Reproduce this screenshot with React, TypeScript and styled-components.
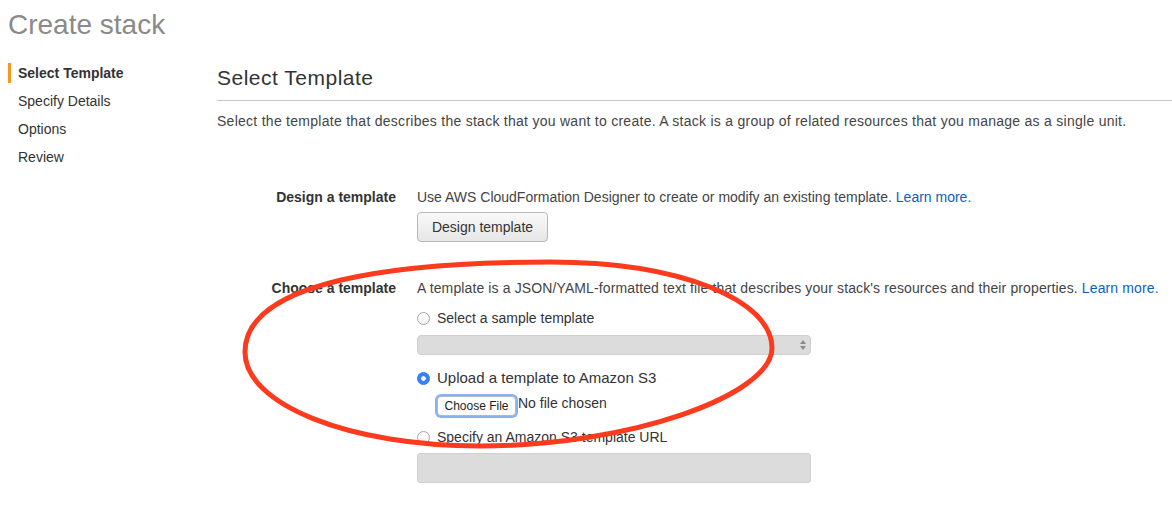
import React from "react";
import styled, { createGlobalStyle } from "styled-components";

const Global = createGlobalStyle`
  html, body { margin: 0; padding: 0; background: #fff; }
  body { font-family: "Liberation Sans", Arial, Helvetica, sans-serif; color: #444; }
  * { box-sizing: border-box; }
`;

const Page = styled.div`
  position: relative;
  width: 1172px;
  height: 512px;
  overflow: hidden;
  padding: 8px 0 0 8px;
`;

const Title = styled.h1`
  margin: 0;
  font-size: 28px;
  line-height: 34px;
  font-weight: 400;
  color: #8a8a8a;
`;

const Layout = styled.div`
  display: grid;
  grid-template-columns: 209px 1fr;
  margin-top: 21px;
`;

const Nav = styled.ul`
  list-style: none;
  margin: 0;
  padding: 0;
  display: flex;
  flex-direction: column;
  gap: 8px;
`;

const NavItem = styled.li<{ $active?: boolean }>`
  height: 20px;
  line-height: 20px;
  font-size: 14px;
  padding-left: 7px;
  border-left: 3px solid ${(p) => (p.$active ? "#f7981d" : "transparent")};
  font-weight: ${(p) => (p.$active ? 700 : 400)};
  color: #333;
`;

const Main = styled.div`
  padding-top: 1px;
`;

const Heading = styled.h2`
  margin: 0;
  font-size: 21px;
  line-height: 28px;
  font-weight: 400;
  color: #333;
  letter-spacing: 0.5px;
  padding-bottom: 8px;
  border-bottom: 1px solid #c8c8c8;
`;

const Lead = styled.p`
  margin: 10px 0 0;
  font-size: 14px;
  line-height: 20px;
  letter-spacing: 0.27px;
  color: #444;
`;

const FormRow = styled.div<{ $gap: number }>`
  display: grid;
  grid-template-columns: 179px 1fr;
  column-gap: 21px;
  margin-top: ${(p) => p.$gap}px;
`;

const Label = styled.div`
  text-align: right;
  font-size: 14px;
  line-height: 20px;
  font-weight: 700;
  color: #333;
`;

const Field = styled.div`
  display: flex;
  flex-direction: column;
  align-items: flex-start;
`;

const Text = styled.div<{ $spacing?: number }>`
  font-size: 14px;
  line-height: 20px;
  letter-spacing: ${(p) => p.$spacing ?? 0}px;
  color: #444;
`;

const Link = styled.a`
  color: #0b5fbf;
  text-decoration: none;
`;

const Button = styled.button`
  margin-top: 5px;
  height: 30px;
  width: 131px;
  font-family: inherit;
  font-size: 14px;
  color: #333;
  border: 1px solid #b8b8b8;
  border-radius: 4px;
  background: linear-gradient(#f9f9f9, #e6e6e6);
  padding: 0;
`;

const RadioRow = styled.label<{ $gap: number; $size?: number }>`
  display: flex;
  align-items: center;
  gap: 7px;
  margin-top: ${(p) => p.$gap}px;
  font-size: ${(p) => p.$size ?? 14}px;
  line-height: 20px;
  color: #333;
`;

const Radio = styled.span<{ $checked?: boolean }>`
  width: 13px;
  height: 13px;
  border-radius: 50%;
  flex: none;
  border: 1px solid ${(p) => (p.$checked ? "#2a73ee" : "#a6a6a6")};
  background: ${(p) =>
    p.$checked
      ? "radial-gradient(circle, #fff 0 2px, #3b82f6 2.5px)"
      : "linear-gradient(#fff, #f2f2f2)"};
`;

const Select = styled.div`
  position: relative;
  margin-top: 7px;
  width: 394px;
  height: 20px;
  border-radius: 4px;
  border: 1px solid #cfcfcf;
  background: #dcdcdc;
`;

const SelectArrows = styled.svg`
  position: absolute;
  right: 3px;
  top: 3px;
`;

const FileRow = styled.div`
  display: flex;
  align-items: center;
  gap: 2px;
  margin-top: 8px;
  margin-left: 20px;
`;

const FileButton = styled.button`
  width: 79px;
  height: 20px;
  padding: 0;
  font-family: inherit;
  font-size: 12px;
  color: #222;
  background: #fff;
  border: 1px solid #a9b8d6;
  border-radius: 4px;
  box-shadow: 0 0 0 2px #8ab0f4;
`;

const FileText = styled.span`
  font-size: 14px;
  color: #333;
  margin-top: -6px;
`;

const Input = styled.div`
  margin-top: 6px;
  width: 394px;
  height: 30px;
  border-radius: 3px;
  border: 1px solid #cfcfcf;
  background: #dcdcdc;
`;

const Annotation = styled.svg`
  position: absolute;
  left: 0;
  top: 0;
  pointer-events: none;
`;

export default function App() {
  return (
    <>
      <Global />
      <Page>
        <Title>Create stack</Title>
        <Layout>
          <Nav>
            <NavItem $active>Select Template</NavItem>
            <NavItem>Specify Details</NavItem>
            <NavItem>Options</NavItem>
            <NavItem>Review</NavItem>
          </Nav>
          <Main>
            <Heading>Select Template</Heading>
            <Lead>
              Select the template that describes the stack that you want to create. A stack is a group of
              related resources that you manage as a single unit.
            </Lead>
            <FormRow $gap={56}>
              <Label>Design a template</Label>
              <Field>
                <Text>
                  Use AWS CloudFormation Designer to create or modify an existing template.{" "}
                  <Link href="#">Learn more.</Link>
                </Text>
                <Button>Design template</Button>
              </Field>
            </FormRow>
            <FormRow $gap={36}>
              <Label>Choose a template</Label>
              <Field>
                <Text $spacing={0.12}>
                  A template is a JSON/YAML-formatted text file that describes your stack's resources and
                  their properties. <Link href="#">Learn more.</Link>
                </Text>
                <RadioRow $gap={10}>
                  <Radio />
                  Select a sample template
                </RadioRow>
                <Select>
                  <SelectArrows width="8" height="12" viewBox="0 0 8 12">
                    <path d="M4 1 L7 5 H1 Z M4 11 L7 7 H1 Z" fill="#8a8a8a" />
                  </SelectArrows>
                </Select>
                <RadioRow $gap={13} $size={15}>
                  <Radio $checked />
                  Upload a template to Amazon S3
                </RadioRow>
                <FileRow>
                  <FileButton>Choose File</FileButton>
                  <FileText>No file chosen</FileText>
                </FileRow>
                <RadioRow $gap={11}>
                  <Radio />
                  Specify an Amazon S3 template URL
                </RadioRow>
                <Input />
              </Field>
            </FormRow>
          </Main>
        </Layout>
        <Annotation width="1172" height="512" viewBox="0 0 1172 512">
          <path
            d="M 245 352 C 245 280, 400 262, 550 262 C 680 262, 772 300, 772 348 C 772 395, 630 446, 480 446 C 350 446, 245 405, 245 352 Z"
            fill="none"
            stroke="#fb3a1e"
            strokeWidth="5"
          />
        </Annotation>
      </Page>
    </>
  );
}
